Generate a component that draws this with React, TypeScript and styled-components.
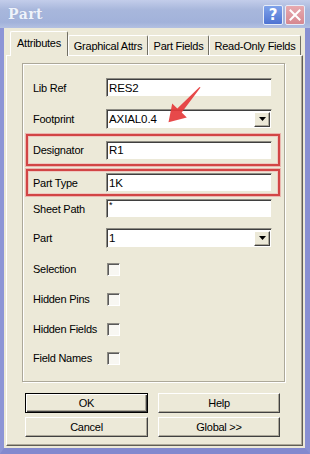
import React from "react";
import styled, { createGlobalStyle } from "styled-components";

const GlobalStyle = createGlobalStyle`
  html, body {
    margin: 0;
    padding: 0;
    background: #ece9d8;
  }
  body {
    font-family: "Liberation Sans", Arial, sans-serif;
    font-size: 11px;
    letter-spacing: -0.25px;
    color: #000;
  }
`;

const Window = styled.div`
  position: relative;
  width: 310px;
  height: 454px;
  display: flex;
  flex-direction: column;
  overflow: hidden;
`;

const TitleBar = styled.div`
  height: 28px;
  flex: none;
  display: flex;
  align-items: center;
  justify-content: space-between;
  padding: 0 5px 0 8px;
  background: linear-gradient(180deg, #c3cdea 0%, #a8b7dc 35%, #a2b2da 80%, #b3c0e2 100%);
`;

const Title = styled.span`
  font-family: "DejaVu Serif", "Liberation Serif", serif;
  font-weight: bold;
  font-size: 14px;
  letter-spacing: 0.5px;
  color: #eef3fb;
  text-shadow: 0 0 1px #8d9cc6;
`;

const TitleButtons = styled.div`
  display: flex;
  gap: 2px;
  margin-top: 2px;
`;

const CaptionButton = styled.div<{ $close?: boolean }>`
  width: 20px;
  height: 20px;
  box-sizing: border-box;
  display: flex;
  align-items: center;
  justify-content: center;
  border: 1px solid #e6ecf8;
  border-radius: 2px;
  background: ${(p) =>
    p.$close
      ? "linear-gradient(180deg, #e7aab0 0%, #d68890 100%)"
      : "linear-gradient(180deg, #7fa2ea 0%, #4e73d2 100%)"};
  color: #fff;
  font-family: "DejaVu Sans", sans-serif;
  font-weight: bold;
  font-size: 15px;
  letter-spacing: 0;
`;

const Frame = styled.div`
  flex: 1;
  display: flex;
  flex-direction: column;
  background: #ece9d8;
  border-left: 4px solid #8d95d6;
  border-right: 5px solid #8890d2;
  border-bottom: 6px solid #8289ce;
  padding-top: 3px;
`;

const TabStrip = styled.div`
  display: flex;
  align-items: flex-end;
  height: 24px;
  padding-left: 6px;
`;

const Tab = styled.div<{ $active?: boolean; $w: number }>`
  position: relative;
  z-index: ${(p) => (p.$active ? 1 : 0)};
  box-sizing: border-box;
  width: ${(p) => p.$w}px;
  height: ${(p) => (p.$active ? 25 : 20)}px;
  margin-bottom: ${(p) => (p.$active ? -1 : 0)}px;
  padding-bottom: ${(p) => (p.$active ? 3 : 0)}px;
  display: flex;
  align-items: center;
  justify-content: center;
  background: #ece9d8;
  border-top: 1px solid #fff;
  border-left: 1px solid #fff;
  border-right: 1px solid #716f64;
  border-radius: 2px 2px 0 0;
  font-size: 11px;
  white-space: nowrap;
`;

const TabPanel = styled.div`
  flex: 1;
  margin: 0 2px 2px 2px;
  padding: 7px 0 0 15px;
  border-top: 1px solid #fff;
  border-left: 1px solid #fff;
  border-right: 1px solid #5f5d55;
  border-bottom: 1px solid #5f5d55;
  box-shadow: inset -1px -1px 0 #aca899;
`;

const GroupBox = styled.div`
  width: 263px;
  height: 319px;
  box-sizing: border-box;
  border: 1px solid #aca899;
  box-shadow: inset 1px 1px 0 #fff, 1px 1px 0 #fff;
  padding: 8px 0 0 3px;
`;

const Row = styled.div<{ $h: number; $mt?: number; $mark?: boolean }>`
  box-sizing: border-box;
  width: 254px;
  height: ${(p) => p.$h}px;
  margin-top: ${(p) => p.$mt || 0}px;
  display: flex;
  align-items: center;
  padding: 0 6px 0 5px;
  border: 2px solid ${(p) => (p.$mark ? "#d24545" : "transparent")};
  box-shadow: ${(p) =>
    p.$mark ? "0 0 0 1px rgba(235, 160, 160, 0.7), inset 0 0 0 1px rgba(240, 180, 180, 0.6)" : "none"};
`;

const Label = styled.span`
  width: 73px;
  flex: none;
  font-size: 11px;
  white-space: nowrap;
`;

const Field = styled.div<{ $small?: boolean }>`
  flex: 1;
  height: 19px;
  box-sizing: border-box;
  display: flex;
  align-items: ${(p) => (p.$small ? "flex-start" : "center")};
  padding-left: 2px;
  background: #fff;
  border-top: 1px solid #8e8c84;
  border-left: 1px solid #8e8c84;
  border-bottom: 1px solid #ece9d8;
  border-right: 1px solid #ece9d8;
  box-shadow: inset 1px 1px 0 #3f3f3f;
  font-size: ${(p) => (p.$small ? 9 : 11.5)}px;
  letter-spacing: -0.1px;
`;

const Select = styled(Field)`
  height: 20px;
  justify-content: space-between;
  padding-right: 1px;
`;

const DropButton = styled.div`
  width: 16px;
  height: 15px;
  box-sizing: border-box;
  display: flex;
  align-items: center;
  justify-content: center;
  background: #ece9d8;
  border-top: 1px solid #fff;
  border-left: 1px solid #fff;
  border-right: 1px solid #404040;
  border-bottom: 1px solid #404040;
  box-shadow: inset -1px -1px 0 #aca899;
  margin-top: 1px;
`;

const Check = styled.div`
  width: 13px;
  height: 13px;
  box-sizing: border-box;
  margin-left: 1px;
  background: #f8f7f2;
  border-top: 1px solid #8e8c84;
  border-left: 1px solid #8e8c84;
  border-right: 1px solid #fff;
  border-bottom: 1px solid #fff;
  box-shadow: inset 1px 1px 0 #5a5a5a;
`;

const Buttons = styled.div`
  margin: 11px 0 0 3px;
  display: grid;
  grid-template-columns: 123px 122px;
  grid-auto-rows: 20px;
  column-gap: 10px;
  row-gap: 4px;
`;

const Button = styled.div<{ $default?: boolean }>`
  box-sizing: border-box;
  display: flex;
  align-items: center;
  justify-content: center;
  font-size: 11px;
  background: #ece9d8;
  border-top: 1px solid ${(p) => (p.$default ? "#000" : "#fff")};
  border-left: 1px solid ${(p) => (p.$default ? "#000" : "#fff")};
  border-right: 1px solid ${(p) => (p.$default ? "#000" : "#404040")};
  border-bottom: 1px solid ${(p) => (p.$default ? "#000" : "#404040")};
  box-shadow: ${(p) =>
    p.$default
      ? "inset 1px 1px 0 #fff, inset -1px -1px 0 #404040, inset -2px -2px 0 #aca899"
      : "inset -1px -1px 0 #aca899"};
`;

const Arrow = styled.svg`
  position: absolute;
  left: 160px;
  top: 82px;
  width: 48px;
  height: 46px;
  pointer-events: none;
`;

type RowDef = {
  label: string;
  kind: "text" | "select" | "check";
  value?: string;
  h: number;
  mt?: number;
  mark?: boolean;
  small?: boolean;
};

const rows: RowDef[] = [
  { label: "Lib Ref", kind: "text", value: "RES2", h: 31 },
  { label: "Footprint", kind: "select", value: "AXIAL0.4", h: 31 },
  { label: "Designator", kind: "text", value: "R1", h: 32, mark: true },
  { label: "Part Type", kind: "text", value: "1K", h: 27, mt: 3, mark: true },
  { label: "Sheet Path", kind: "text", value: "*", h: 25, small: true },
  { label: "Part", kind: "select", value: "1", h: 33 },
  { label: "Selection", kind: "check", h: 30 },
  { label: "Hidden Pins", kind: "check", h: 30 },
  { label: "Hidden Fields", kind: "check", h: 30 },
  { label: "Field Names", kind: "check", h: 28 },
];

const tabs = [
  { label: "Attributes", w: 58, active: true },
  { label: "Graphical Attrs", w: 80 },
  { label: "Part Fields", w: 61 },
  { label: "Read-Only Fields", w: 92 },
];

const App = () => {
  return (
    <>
      <GlobalStyle />
      <Window>
        <TitleBar>
          <Title>Part</Title>
          <TitleButtons>
            <CaptionButton>?</CaptionButton>
            <CaptionButton $close>
              <svg width="12" height="12" viewBox="0 0 12 12">
                <path d="M1.5 1.5 L10.5 10.5 M10.5 1.5 L1.5 10.5" stroke="#fff" strokeWidth="2" strokeLinecap="square" />
              </svg>
            </CaptionButton>
          </TitleButtons>
        </TitleBar>
        <Frame>
          <TabStrip>
            {tabs.map((t) => (
              <Tab key={t.label} $w={t.w} $active={t.active}>
                {t.label}
              </Tab>
            ))}
          </TabStrip>
          <TabPanel>
            <GroupBox>
              {rows.map((r) => (
                <Row key={r.label} $h={r.h} $mt={r.mt} $mark={r.mark}>
                  <Label>{r.label}</Label>
                  {r.kind === "text" && <Field $small={r.small}>{r.value}</Field>}
                  {r.kind === "select" && (
                    <Select>
                      <span>{r.value}</span>
                      <DropButton>
                        <svg width="7" height="4" viewBox="0 0 7 4">
                          <path d="M0 0 H7 L3.5 4 Z" fill="#000" />
                        </svg>
                      </DropButton>
                    </Select>
                  )}
                  {r.kind === "check" && <Check />}
                </Row>
              ))}
            </GroupBox>
            <Buttons>
              <Button $default>OK</Button>
              <Button>Help</Button>
              <Button>Cancel</Button>
              <Button>Global &gt;&gt;</Button>
            </Buttons>
          </TabPanel>
        </Frame>
        <Arrow viewBox="0 0 48 46">
          <polygon
            points="40.5,5.5 21.7,30.6 26.8,35.4 8.5,40.2 12.2,21.6 17.3,26.4 39.5,5"
            fill="#e5393b"
            fillOpacity="0.92"
          />
        </Arrow>
      </Window>
    </>
  );
};

export default App;
